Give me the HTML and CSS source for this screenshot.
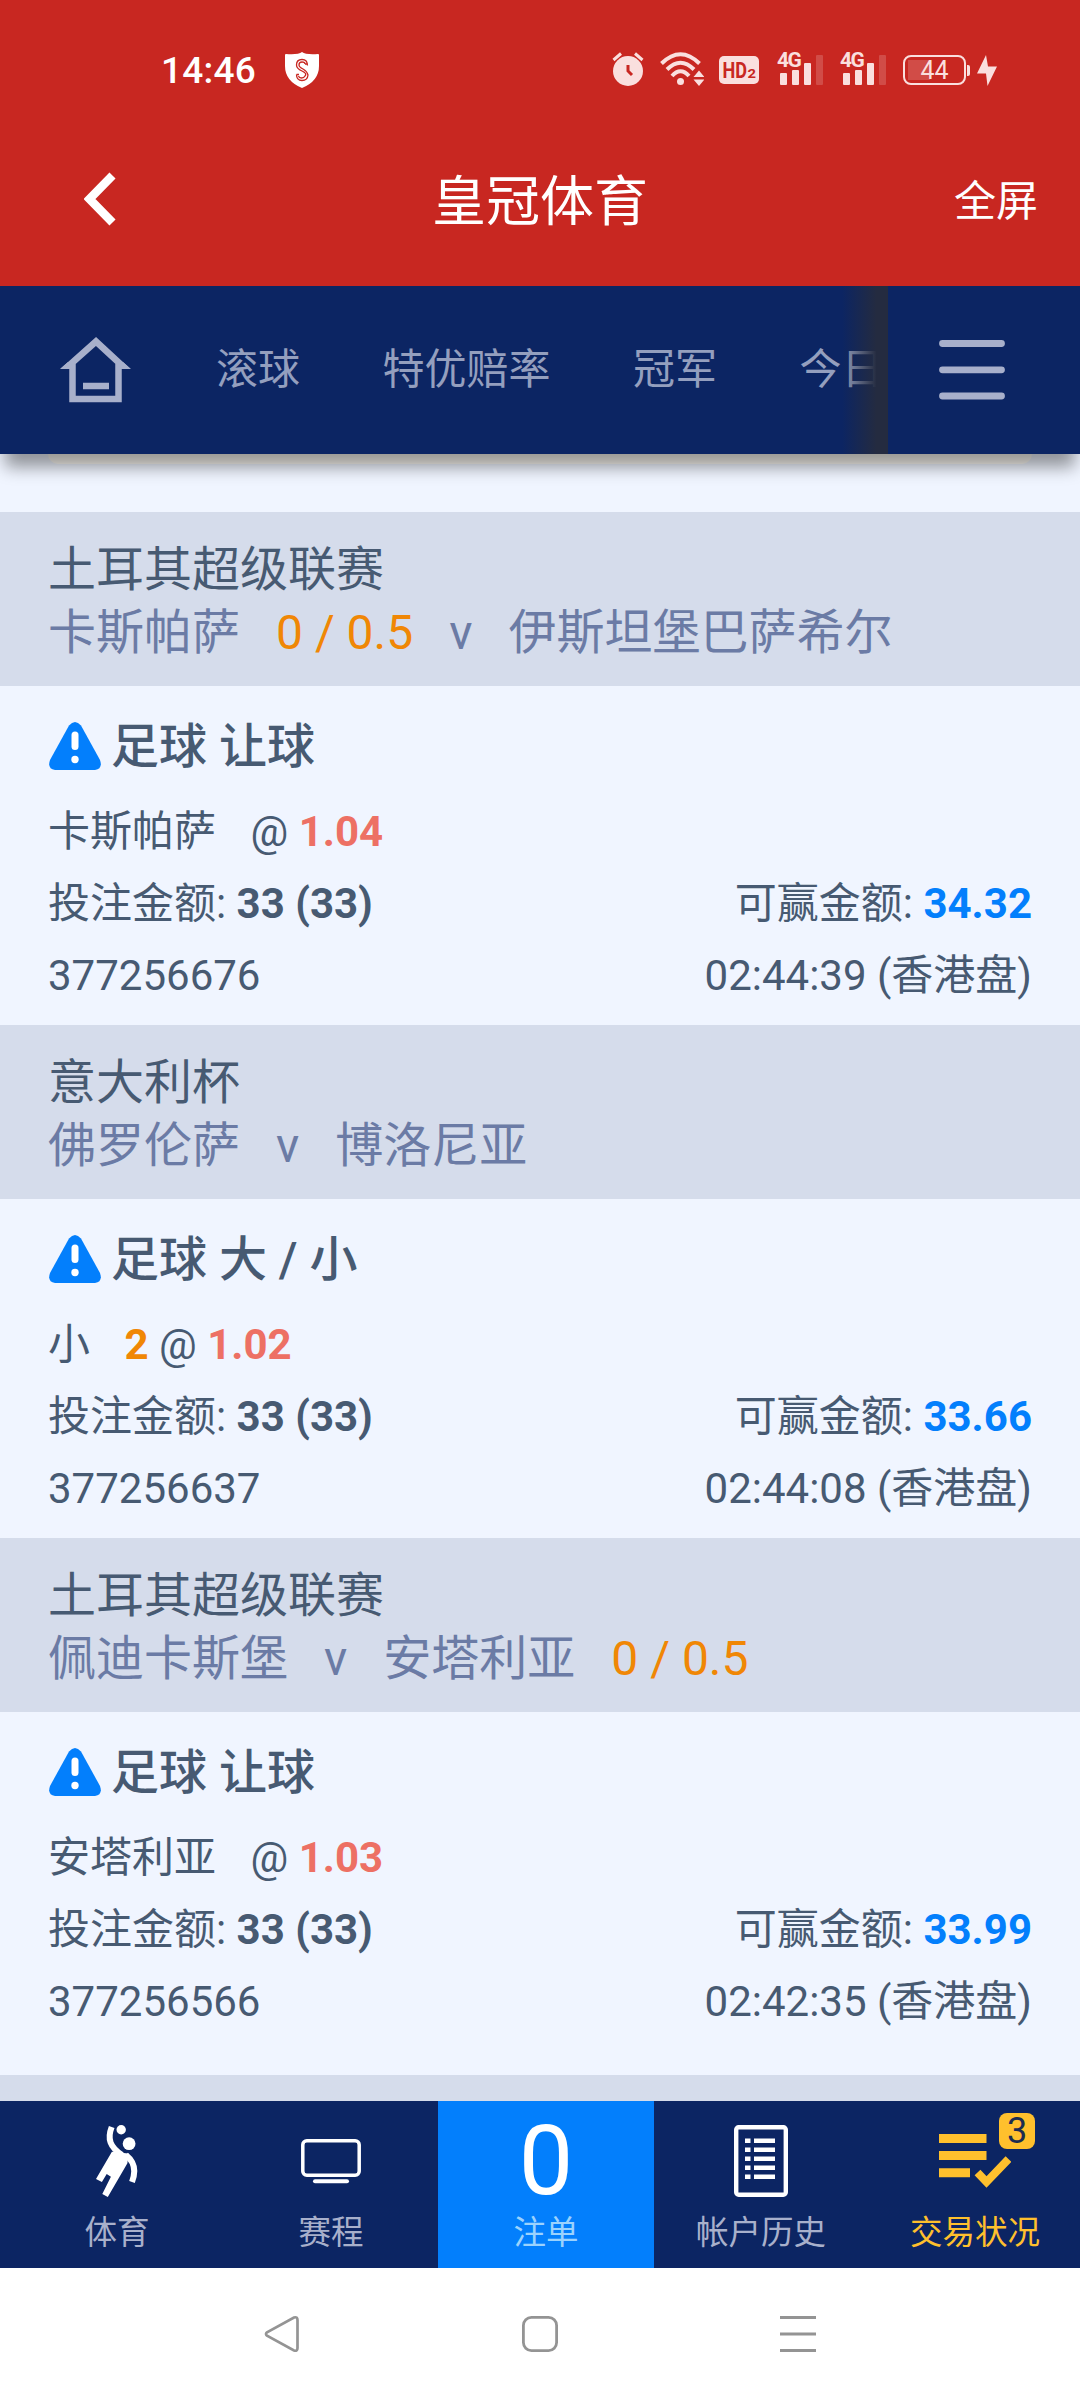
FILE: index.html
```html
<!DOCTYPE html>
<html lang="zh-CN">
<head>
<meta charset="utf-8">
<title>皇冠体育</title>
<link rel="stylesheet" href="styles.css">
</head>
<body>
<div class="screen">
  <header class="top">
    <div class="status">
      <span class="clock">14:46</span>
      <svg class="shield" width="34" height="36" viewBox="0 0 34 36"><path fill="#fff" d="M17 0Q21 3 33 2Q34 2 34 3V14Q34 29 17 36Q0 29 0 14V3Q0 2 1 2Q13 3 17 0Z"/><g fill="none" stroke="#c82721" stroke-width="1.3"><path d="M22.500 13.500Q22.500 7.500 17 7.500T11.500 13Q11.500 16.500 17 19T20 24Q19 26 16.500 26T13.500 24"/><path d="M20 12Q20 10 17 10T14 13Q14 15 18 17T23 23Q22.500 28.500 17 28.500T11.500 22.500"/><path d="M11.500 22.500H14M20 12H22.500"/></g></svg>
      <div class="signals">
        <svg class="alarm" width="32" height="36" viewBox="0 0 32 36"><circle cx="16" cy="20" r="15" fill="#fadfde"/><path d="M1.500 9L9 2.500M30.500 9L23 2.500" stroke="#fadfde" stroke-width="3" fill="none"/><path d="M16 14V20L20 24" stroke="#c82721" stroke-width="3" fill="none"/></svg>
        <svg class="wifi" width="44" height="36" viewBox="0 0 44 36"><g fill="none" stroke="#fadfde" stroke-width="4"><path d="M1.500 12.500Q20.500 -6 39.500 12.500"/><path d="M7 18.500Q20.500 5 34 18.500"/><path d="M12 25Q20.500 15.500 29 25"/></g><circle cx="20.500" cy="30.500" r="3.500" fill="#fadfde"/><path fill="#fadfde" d="M39 19.500L44.500 26H33.500ZM39 35L33.500 28.500H44.500Z"/></svg>
        <svg class="hd" width="40" height="28" viewBox="0 0 40 28"><rect width="40" height="28" rx="5" fill="#fadfde"/><text x="3.500" y="22" font-size="21.500" textLength="24.500" lengthAdjust="spacingAndGlyphs">HD</text><text x="28.500" y="22" font-size="13.500" textLength="8.500" lengthAdjust="spacingAndGlyphs">2</text></svg>
        <span class="cell"><b>4G</b><i class="b1"></i><i class="b2"></i><i class="b3"></i><i class="b4"></i></span>
        <span class="cell"><b>4G</b><i class="b1"></i><i class="b2"></i><i class="b3"></i><i class="b4"></i></span>
        <span class="battery">44</span><span class="tip"></span>
        <svg class="bolt" width="20" height="31" viewBox="0 0 20 31"><path fill="#fadfde" d="M9 0L0 18.500H9L10.500 31L20 11.500H11Z"/></svg>
      </div>
    </div>
    <div class="titlebar">
      <svg width="32" height="54" viewBox="0 0 32 54"><path d="M28.500 3.500L5.500 27L28.500 50.500" fill="none" stroke="#fff" stroke-width="8.500"/></svg>
      <h1>皇冠体育</h1>
      <span class="full">全屏</span>
    </div>
  </header>

  <nav class="menu">
    <svg class="home" width="72" height="66" viewBox="0 0 72 66"><path d="M12.500 28.500V62H58.500V28.500H62L36 4.500L9 28.500Z" fill="none" stroke="#a8b0cb" stroke-width="6.500"/><path d="M0 32L8 25H14V32ZM71 32L63 25H57V32Z" fill="#a8b0cb"/><path d="M23 49H49" stroke="#a8b0cb" stroke-width="6.500"/></svg>
    <div class="tabs"><span>滚球</span><span>特优赔率</span><span>冠军</span><span>今日</span></div>
    <svg class="burger" width="66" height="60" viewBox="0 0 66 60"><path d="M3.500 3.500H62.500M3.500 29.800H62.500M3.500 56H62.500" stroke="#a8b0cb" stroke-width="6.800" stroke-linecap="round"/></svg>
  </nav>

  <main class="bets">
    <div class="prev"></div>

    <section class="match">
      <div>土耳其超级联赛</div>
      <div class="teams"><span>卡斯帕萨</span><span class="line">0 / 0.5</span><span>v</span><span>伊斯坦堡巴萨希尔</span></div>
    </section>
    <section class="bet">
      <h2><svg width="52" height="48" viewBox="0 0 52 48"><path fill="#037ffc" d="M20 3.500Q26 -3.500 32 3.500L51 38Q54 47 46 48H6Q-2 47 1 38Z"/><path d="M26 13V24.500" stroke="#fff" stroke-width="7" stroke-linecap="round"/><circle cx="26" cy="37.500" r="3.700" fill="#fff"/></svg><span>足球 让球</span></h2>
      <p><span>卡斯帕萨<span class="at">@</span> <b class="odds">1.04</b></span></p>
      <p><span>投注金额: <b>33 (33)</b></span><span>可赢金额: <b class="win">34.32</b></span></p>
      <p><span>377256676</span><span>02:44:39 (香港盘)</span></p>
    </section>

    <section class="match">
      <div>意大利杯</div>
      <div class="teams"><span>佛罗伦萨</span><span>v</span><span>博洛尼亚</span></div>
    </section>
    <section class="bet">
      <h2><svg width="52" height="48" viewBox="0 0 52 48"><path fill="#037ffc" d="M20 3.500Q26 -3.500 32 3.500L51 38Q54 47 46 48H6Q-2 47 1 38Z"/><path d="M26 13V24.500" stroke="#fff" stroke-width="7" stroke-linecap="round"/><circle cx="26" cy="37.500" r="3.700" fill="#fff"/></svg><span>足球 大 / 小</span></h2>
      <p><span>小<b class="at line">2</b> @ <b class="odds">1.02</b></span></p>
      <p><span>投注金额: <b>33 (33)</b></span><span>可赢金额: <b class="win">33.66</b></span></p>
      <p><span>377256637</span><span>02:44:08 (香港盘)</span></p>
    </section>

    <section class="match">
      <div>土耳其超级联赛</div>
      <div class="teams"><span>佩迪卡斯堡</span><span>v</span><span>安塔利亚</span><span class="line">0 / 0.5</span></div>
    </section>
    <section class="bet last">
      <h2><svg width="52" height="48" viewBox="0 0 52 48"><path fill="#037ffc" d="M20 3.500Q26 -3.500 32 3.500L51 38Q54 47 46 48H6Q-2 47 1 38Z"/><path d="M26 13V24.500" stroke="#fff" stroke-width="7" stroke-linecap="round"/><circle cx="26" cy="37.500" r="3.700" fill="#fff"/></svg><span>足球 让球</span></h2>
      <p><span>安塔利亚<span class="at">@</span> <b class="odds">1.03</b></span></p>
      <p><span>投注金额: <b>33 (33)</b></span><span>可赢金额: <b class="win">33.99</b></span></p>
      <p><span>377256566</span><span>02:42:35 (香港盘)</span></p>
    </section>
    <div class="rest"></div>
  </main>

  <footer class="dock">
    <div class="item">
      <div class="pic"><svg width="42" height="72" viewBox="0 0 42 72"><g fill="#fff"><circle cx="25.200" cy="4.700" r="4.700"/><circle cx="33.100" cy="18.700" r="6.400"/><path d="M15.900 26.700L32.500 28.500L31.400 38.300L11.800 72L6.300 69L14.900 51.700L10.700 49L5.900 57L0 54Z"/></g><g fill="none" stroke="#fff" stroke-width="6"><path d="M15.700 2C11 14 14 22 26 30"/><path d="M30 30C40 38 39.500 48 36 57"/></g></svg></div>
      <span>体育</span>
    </div>
    <div class="item">
      <div class="pic"><svg width="60" height="72" viewBox="0 0 60 72"><rect x="1.800" y="15.800" width="56.400" height="34.400" rx="4" fill="none" stroke="#fff" stroke-width="3.500"/><path d="M14 56.200H46" stroke="#fff" stroke-width="4" stroke-linecap="round"/></svg></div>
      <span>赛程</span>
    </div>
    <div class="item active">
      <div class="pic count">0</div>
      <span>注单</span>
    </div>
    <div class="item">
      <div class="pic"><svg width="54" height="72" viewBox="0 0 54 72"><rect x="2.200" y="2.200" width="49.600" height="67.600" rx="2.500" fill="none" stroke="#fff" stroke-width="4.400"/><path d="M11 15.800H16.500M20 15.800H41M11 24.800H16.500M20 24.800H41M11 33.800H16.500M20 33.800H41M11 42.800H16.500M20 42.800H41M11 51.800H16.500M20 51.800H41" stroke="#fff" stroke-width="4.600"/></svg></div>
      <span>帐户历史</span>
    </div>
    <div class="item gold">
      <div class="pic"><svg width="72" height="72" viewBox="0 0 72 72"><path d="M0 13.400H47.500M0 30.500H47.500M0 47.800H31" stroke="#ffc02d" stroke-width="9"/><path d="M38.500 47.500L47.500 57L69.500 34" fill="none" stroke="#ffc02d" stroke-width="8"/></svg></div>
      <span>交易状况</span>
      <em class="badge">3</em>
    </div>
  </footer>

  <div class="system">
    <svg width="36" height="38" viewBox="0 0 36 38"><path d="M3 17.300Q1 19 3 20.700L30 35.500Q33.500 36.500 33.500 33V5Q33.500 1.500 30 2.500Z" fill="none" stroke="#949494" stroke-width="2.700"/></svg>
    <svg width="38" height="38" viewBox="0 0 38 38"><rect x="2.400" y="2.400" width="33.200" height="33.200" rx="8" fill="none" stroke="#949494" stroke-width="2.800"/></svg>
    <svg width="36" height="38" viewBox="0 0 36 38"><path d="M0 2.600H36M0 19H36M0 35.400H36" stroke="#949494" stroke-width="3"/></svg>
  </div>
</div>
</body>
</html>
```

FILE: styles.css
```css
* { box-sizing: border-box; }

body {
  margin: 0;
  font-family: Roboto, "Noto Sans CJK SC", sans-serif;
  color: #475a72;
  background: #fff;
}

svg { display: block; flex: none; }

.screen {
  display: flex;
  flex-direction: column;
  width: 1080px;
  height: 2400px;
  overflow: hidden;
}

/* Red header */
.top { height: 286px; background: #c82721; color: #fff; }

.status {
  display: flex;
  align-items: center;
  height: 140px;
  padding: 0 83px 0 161px;
}
.clock { width: 124px; font-size: 37px; font-weight: 500; letter-spacing: 0.2px; }
.signals { display: flex; align-items: center; margin-left: auto; color: #fadfde; }
.alarm { margin-top: -2px; }
.wifi { margin-left: 16px; margin-top: -3px; }
.hd { margin-left: 15px; fill: #c82721; font-weight: 700; }
.cell {
  position: relative;
  display: flex;
  align-items: flex-end;
  gap: 5px;
  width: 43px;
  height: 32px;
  margin-left: 21px;
  margin-top: -3px;
}
.cell + .cell { margin-left: 20px; }
.cell b { position: absolute; left: -3px; top: -3px; font-size: 21px; line-height: 21px; letter-spacing: -1.5px; }
.cell i { width: 7px; border-radius: 1px; background: #fadfde; }
.b1 { height: 12px; }
.b2 { height: 15px; }
.b3 { height: 22px; }
.cell .b4 { height: 30px; background: #d14c47; }
.battery {
  width: 63px;
  height: 30px;
  margin-left: 17px;
  border: 2px solid #fadfde;
  border-radius: 8px;
  background: linear-gradient(#d14c47, #d14c47) 3px center / 22px 20px no-repeat;
  font-size: 25px;
  line-height: 28px;
  text-align: center;
}
.tip { width: 3px; height: 11px; margin-left: 1px; border-radius: 0 2px 2px 0; background: #fadfde; }
.bolt { margin-left: 7px; }

.titlebar {
  display: grid;
  grid-template-columns: 1fr auto 1fr;
  align-items: center;
  height: 118px;
  padding: 0 42px 0 84px;
}
.titlebar h1 { margin: 8px 0 0 -42px; font-size: 54px; line-height: 60px; font-weight: 400; }
.full { justify-self: end; margin-top: 6px; font-size: 42px; line-height: 60px; }

/* Category menu */
.menu {
  position: relative;
  z-index: 1;
  display: flex;
  align-items: center;
  height: 168px;
  padding: 0 75px 0 60px;
  background: #0c2563;
  box-shadow: 0 18px 16px -5px rgba(0, 0, 0, 0.4);
}
.tabs {
  position: relative;
  display: flex;
  gap: 82.500px;
  width: 756px;
  height: 168px;
  padding-left: 84px;
  overflow: hidden;
  color: #949fbe;
  font-size: 42px;
  line-height: 168px;
  white-space: nowrap;
}
.tabs::after {
  content: "";
  position: absolute;
  right: 0;
  top: 0;
  width: 46px;
  height: 100%;
  background: linear-gradient(to right, rgba(36, 43, 64, 0), #242b40 75%);
}
.burger { margin-left: auto; }

/* Bet list */
.bets { height: 1647px; background: #f0f5ff; overflow: hidden; }
.prev {
  height: 10px;
  margin: 0 48px 48px;
  border-radius: 0 0 10px 10px;
  background: #fffdf7;
}
.match {
  height: 174px;
  padding: 26px 48px 0;
  background: #d5dceb;
  font-size: 48px;
  line-height: 63px;
  white-space: nowrap;
}
.teams { display: flex; gap: 36px; color: #6b7ba5; }
.line { color: #f08705; }
.bet { height: 339px; padding: 18px 48px 0; font-size: 42px; }
.bet.last { height: 363px; }
.bet h2 {
  display: flex;
  align-items: center;
  gap: 10px;
  height: 84px;
  margin: 0 0 8px;
  padding-left: 1px;
  font-size: 48px;
  line-height: 60px;
  font-weight: 500;
}
.bet h2 span { margin-top: 1px; }
.bet p { display: flex; justify-content: space-between; margin: 0; height: 72px; line-height: 72px; }
.bet b { font-weight: 700; }
.at { margin-left: 34.500px; }
.odds { color: #ed7064; }
.bet .win { color: #037ffc; }
.rest { height: 26px; background: #d5dceb; }

/* Bottom tabs */
.dock {
  display: grid;
  grid-template-columns: 214px 214px 216px 214px 214px;
  flex: none;
  height: 167px;
  padding-left: 10px;
  background: #0c2563;
}
.item {
  position: relative;
  display: flex;
  flex-direction: column;
  align-items: center;
  padding-top: 24px;
  color: #a8b0cb;
  font-size: 32.500px;
  line-height: 40px;
}
.pic { display: flex; justify-content: center; align-items: center; height: 72px; margin-bottom: 16px; }
.active { background: #037ffc; color: #9bd2fd; }
.count { color: #fff; font-size: 97px; line-height: 72px; }
.gold { color: #ffc02d; }
.badge {
  position: absolute;
  left: 131px;
  top: 12px;
  width: 36px;
  height: 36px;
  border-radius: 8px;
  background: #ffc02d;
  color: #1c2c50;
  font-size: 36px;
  font-style: normal;
  line-height: 36px;
  text-align: center;
}

/* System buttons */
.system {
  display: flex;
  justify-content: space-between;
  height: 132px;
  padding: 47px 264px 0;
  background: #fff;
}
```
